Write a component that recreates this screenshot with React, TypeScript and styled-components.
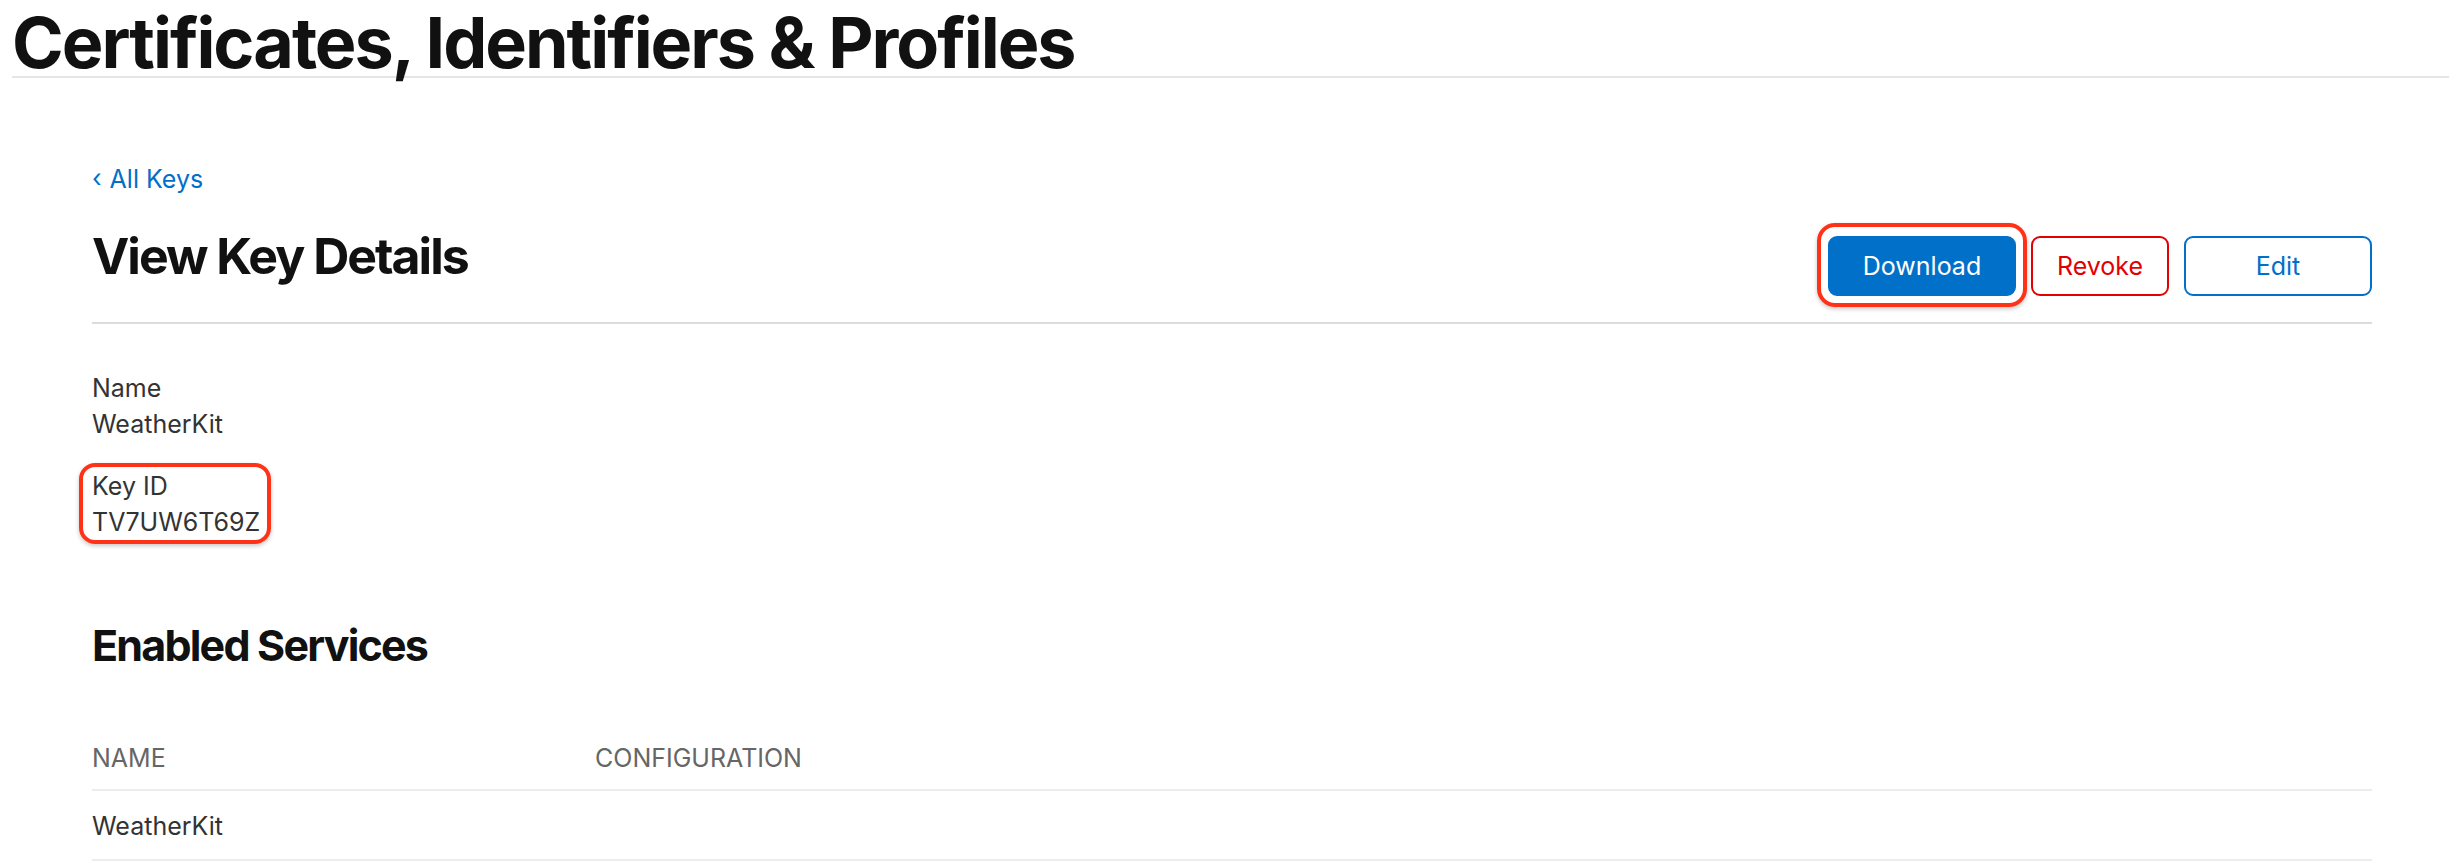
import React from 'react';
import styled, { createGlobalStyle } from 'styled-components';

const GlobalStyle = createGlobalStyle`
  html, body {
    margin: 0;
    padding: 0;
    background: #fff;
  }
  body {
    font-family: Inter, "Liberation Sans", Arial, sans-serif;
    color: #333;
    -webkit-font-smoothing: antialiased;
  }
`;

const PageHeader = styled.header`
  margin: 0 5px 0 12px;
  padding-top: 9px;
  border-bottom: 2px solid #e5e5e5;
`;

const PageTitle = styled.h1`
  margin: 0;
  font-size: 70px;
  line-height: 67px;
  font-weight: 700;
  letter-spacing: -2px;
  color: #111;
`;

const Main = styled.main`
  padding: 83px 82px 0 92px;
`;

const BackLink = styled.a`
  display: inline-flex;
  align-items: center;
  gap: 8px;
  font-size: 25px;
  line-height: 36px;
  color: #0070c9;
  text-decoration: none;
`;

const Chevron = styled.span`
  font-size: 25px;
  line-height: 1;
  position: relative;
  top: -1px;
`;

const TitleRow = styled.div`
  display: flex;
  justify-content: space-between;
  align-items: flex-start;
  margin-top: 39px;
  padding-bottom: 26px;
  border-bottom: 2px solid #dcdcdc;
`;

const SectionTitle = styled.h2<{ $size: number; $lh: number; $track: number }>`
  margin: 0;
  font-size: ${(p) => p.$size}px;
  line-height: ${(p) => p.$lh}px;
  font-weight: 700;
  letter-spacing: ${(p) => p.$track}px;
  color: #111;
`;

const Actions = styled.div`
  display: flex;
  gap: 15px;
`;

const Button = styled.button<{ $variant: 'primary' | 'danger' | 'outline'; $width: number; $marked?: boolean }>`
  position: relative;
  width: ${(p) => p.$width}px;
  height: 60px;
  border-radius: 9px;
  font-family: inherit;
  font-size: 25px;
  cursor: pointer;
  border: 2px solid ${(p) => (p.$variant === 'danger' ? '#e30000' : '#0070c9')};
  background: ${(p) => (p.$variant === 'primary' ? '#0070c9' : '#fff')};
  color: ${(p) => (p.$variant === 'primary' ? '#fff' : p.$variant === 'danger' ? '#e30000' : '#0070c9')};

  ${(p) =>
    p.$marked &&
    `
    &::after {
      content: '';
      position: absolute;
      top: -15px;
      bottom: -13px;
      left: -13px;
      right: -13px;
      border: 4px solid #ff3218;
      border-radius: 18px;
      box-shadow: 0 2px 4px rgba(0, 0, 0, 0.22);
      pointer-events: none;
    }
  `}
`;

const Details = styled.dl`
  margin: 46px 0 0;
  display: flex;
  flex-direction: column;
  align-items: flex-start;
  gap: 26px;
`;

const Field = styled.div<{ $marked?: boolean }>`
  position: relative;

  ${(p) =>
    p.$marked &&
    `
    &::after {
      content: '';
      position: absolute;
      top: -5px;
      bottom: -4px;
      left: -13px;
      right: -11px;
      border: 4px solid #ff3218;
      border-radius: 16px;
      box-shadow: 0 2px 4px rgba(0, 0, 0, 0.22);
      pointer-events: none;
    }
  `}
`;

const Label = styled.dt`
  font-size: 25px;
  line-height: 36px;
  color: #333;
`;

const Value = styled.dd`
  margin: 0;
  font-size: 25px;
  line-height: 36px;
  color: #333;
`;

const Services = styled.section`
  margin-top: 81px;
`;

const Table = styled.div`
  margin-top: 71px;
`;

const TableRow = styled.div<{ $head?: boolean }>`
  display: grid;
  grid-template-columns: 503px 1fr;
  padding: ${(p) => (p.$head ? '0 0 13px' : '17px 0 15px')};
  border-bottom: 2px solid #ececec;
  font-size: 25px;
  line-height: 36px;
  color: ${(p) => (p.$head ? '#666' : '#333')};
  text-transform: ${(p) => (p.$head ? 'uppercase' : 'none')};
`;

const App = () => {
  return (
    <>
      <GlobalStyle />
      <PageHeader>
        <PageTitle>Certificates, Identifiers &amp; Profiles</PageTitle>
      </PageHeader>
      <Main>
        <BackLink href="#">
          <Chevron>‹</Chevron>
          All Keys
        </BackLink>

        <TitleRow>
          <SectionTitle $size={50} $lh={40} $track={-2}>View Key Details</SectionTitle>
          <Actions>
            <Button $variant="primary" $width={188} $marked>Download</Button>
            <Button $variant="danger" $width={138}>Revoke</Button>
            <Button $variant="outline" $width={188}>Edit</Button>
          </Actions>
        </TitleRow>

        <Details>
          <Field>
            <Label>Name</Label>
            <Value>WeatherKit</Value>
          </Field>
          <Field $marked>
            <Label>Key ID</Label>
            <Value>TV7UW6T69Z</Value>
          </Field>
        </Details>

        <Services>
          <SectionTitle $size={43} $lh={48} $track={-1.8}>Enabled Services</SectionTitle>
          <Table>
            <TableRow $head>
              <span>Name</span>
              <span>Configuration</span>
            </TableRow>
            <TableRow>
              <span>WeatherKit</span>
              <span />
            </TableRow>
          </Table>
        </Services>
      </Main>
    </>
  );
};

export default App;
